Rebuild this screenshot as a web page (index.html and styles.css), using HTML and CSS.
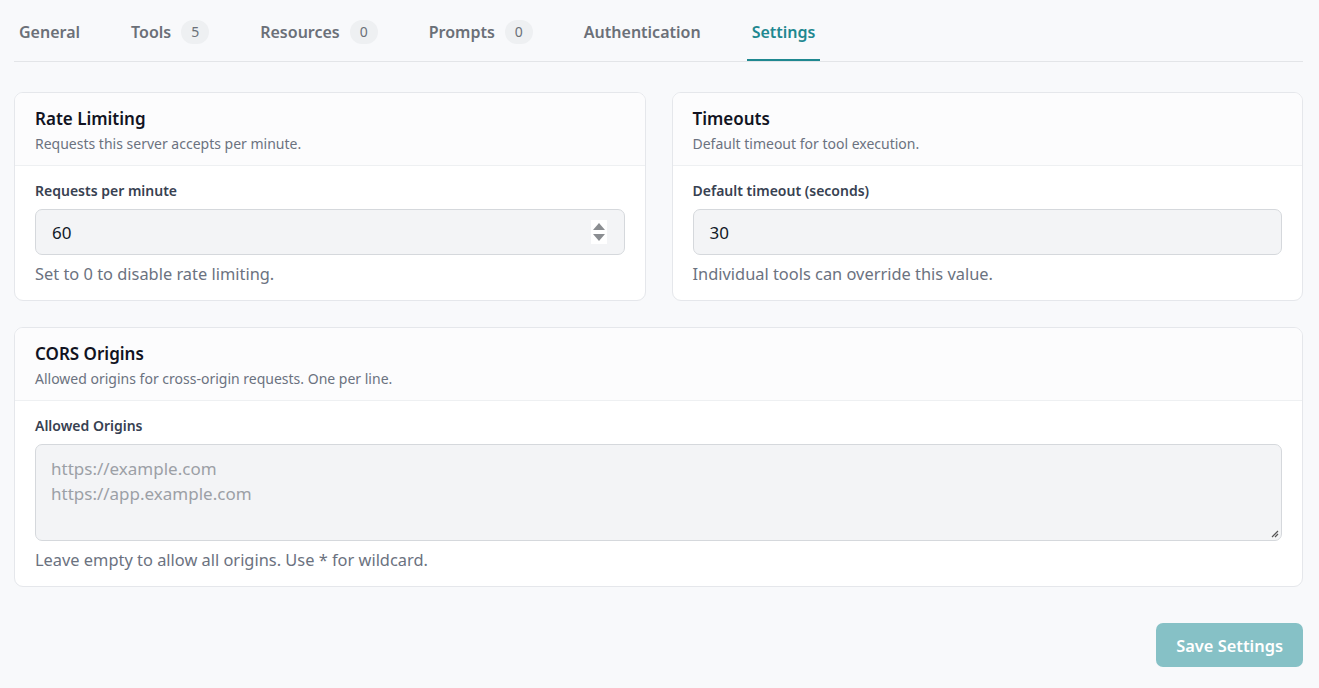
FILE: index.html
```html
<!DOCTYPE html>
<html lang="en">
<head>
    <meta charset="UTF-8">
    <meta name="viewport" content="width=device-width, initial-scale=1.0">
    <title>Server Settings</title>
    <link rel="stylesheet" href="styles.css">
</head>
<body>

<div class="page">
    <nav class="tabs">
        <a class="tab">General</a>
        <a class="tab">Tools <span class="badge">5</span></a>
        <a class="tab">Resources <span class="badge">0</span></a>
        <a class="tab">Prompts <span class="badge">0</span></a>
        <a class="tab">Authentication</a>
        <a class="tab active">Settings</a>
    </nav>

    <div class="grid">
        <section class="card">
            <div class="card-header">
                <h3>Rate Limiting</h3>
                <p>Requests this server accepts per minute.</p>
            </div>
            <div class="card-body">
                <label class="field-label">Requests per minute</label>
                <div class="input number">
                    <span>60</span>
                    <span class="spinner">
                        <svg width="14" height="24" viewBox="0 0 14 24">
                            <path d="M7 3 L13 10 L1 10 Z" fill="#8a8d91"/>
                            <path d="M1 14 L13 14 L7 21 Z" fill="#8a8d91"/>
                        </svg>
                    </span>
                </div>
                <p class="help">Set to 0 to disable rate limiting.</p>
            </div>
        </section>

        <section class="card">
            <div class="card-header">
                <h3>Timeouts</h3>
                <p>Default timeout for tool execution.</p>
            </div>
            <div class="card-body">
                <label class="field-label">Default timeout (seconds)</label>
                <div class="input"><span>30</span></div>
                <p class="help">Individual tools can override this value.</p>
            </div>
        </section>

        <section class="card wide">
            <div class="card-header">
                <h3>CORS Origins</h3>
                <p>Allowed origins for cross-origin requests. One per line.</p>
            </div>
            <div class="card-body">
                <label class="field-label">Allowed Origins</label>
                <div class="textarea">
                    <span class="placeholder">https://example.com<br>https://app.example.com</span>
                    <svg class="grip" width="9" height="9" viewBox="0 0 9 9">
                        <path d="M8 2 L2 8 M8 5 L5 8" stroke="#555" stroke-width="1.2"/>
                    </svg>
                </div>
                <p class="help">Leave empty to allow all origins. Use * for wildcard.</p>
            </div>
        </section>
    </div>

    <div class="actions">
        <button class="save">Save Settings</button>
    </div>
</div>

</body>
</html>
```

FILE: styles.css
```css
body {
    font-family: 'Noto Sans', 'Open Sans', sans-serif;
    margin: 0;
    background-color: #f8f9fb;
    color: #111827;
}

.page {
    padding: 0 16px 0 14px;
}

/* Tabs */
.tabs {
    display: flex;
    gap: 41px;
    border-bottom: 1px solid #e3e5e8;
}

.tab {
    display: flex;
    align-items: center;
    gap: 10px;
    padding: 20px 5px 15px;
    font-size: 16px;
    font-weight: 600;
    line-height: 24px;
    color: #6b7078;
    border-bottom: 2px solid transparent;
}

.tab.active {
    color: #1f8890;
    border-bottom-color: #1f8890;
}

.badge {
    display: inline-flex;
    align-items: center;
    justify-content: center;
    min-width: 28px;
    height: 24px;
    border-radius: 12px;
    background-color: #eef0f2;
    color: #6b7078;
    font-size: 14px;
    font-weight: 400;
}

/* Cards */
.grid {
    display: grid;
    grid-template-columns: 1fr 1fr;
    gap: 26px;
    margin-top: 30px;
}

.card {
    background-color: white;
    border: 1px solid #e5e7eb;
    border-radius: 9px;
    overflow: hidden;
}

.card.wide {
    grid-column: span 2;
}

.card-header {
    background-color: #fcfcfd;
    padding: 14px 20px 11px;
    border-bottom: 1px solid #eef0f2;
}

.card-header h3 {
    margin: 0;
    font-size: 17px;
    font-weight: 600;
    line-height: 24px;
    color: #111322;
}

.card-header p {
    margin: 3px 0 0;
    font-size: 14px;
    line-height: 20px;
    color: #6b7280;
}

.card-body {
    padding: 15px 20px 14px;
}

.field-label {
    display: block;
    font-size: 14px;
    font-weight: 600;
    line-height: 20px;
    color: #374151;
    margin-bottom: 8px;
}

.input {
    display: flex;
    align-items: center;
    justify-content: space-between;
    height: 44px;
    padding: 0 16px 0 16px;
    background-color: #f3f4f6;
    border: 1px solid #d5d8dc;
    border-radius: 7px;
    font-size: 17px;
    color: #111827;
}

.input.number {
    padding-right: 17px;
}

.spinner {
    display: flex;
    align-items: center;
    background-color: white;
    padding: 0 1px;
}

.textarea {
    position: relative;
    height: 74px;
    padding: 11px 15px 10px;
    background-color: #f3f4f6;
    border: 1px solid #d5d8dc;
    border-radius: 7px;
    font-size: 17px;
    line-height: 25px;
}

.placeholder {
    color: #9ca0a6;
}

.grip {
    position: absolute;
    right: 2px;
    bottom: 2px;
}

.help {
    margin: 7px 0 0;
    font-size: 16.4px;
    line-height: 24px;
    color: #6b7280;
}

.actions {
    display: flex;
    justify-content: flex-end;
    margin-top: 36px;
}

.save {
    font-family: inherit;
    height: 44px;
    padding: 0 20px;
    border: none;
    border-radius: 7px;
    background-color: #86c1c6;
    color: white;
    font-size: 16.4px;
    font-weight: 600;
}
```
